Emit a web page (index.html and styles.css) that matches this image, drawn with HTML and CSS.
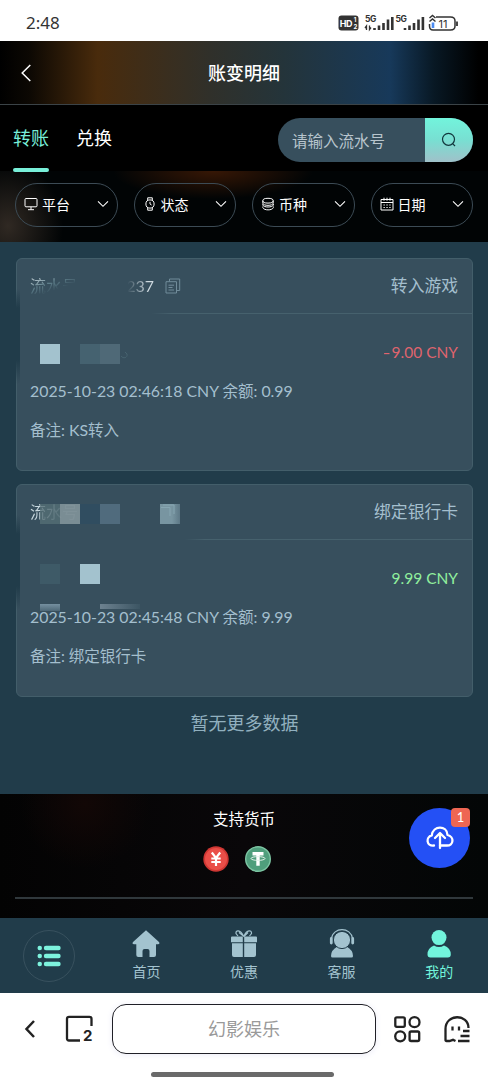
FILE: index.html
```html
<!DOCTYPE html>
<html lang="zh-CN">
<head>
<meta charset="utf-8">
<meta name="viewport" content="width=device-width, initial-scale=1">
<title>账变明细</title>
<link rel="stylesheet" href="styles.css">
</head>
<body>
<div class="phone">
  <div class="status">
    <span class="clock">2:48</span>
    <svg class="status-icons" width="122" height="18" viewBox="0 0 122 18">
      <rect x="0.5" y="1.5" width="20" height="15" rx="3" fill="#333"/>
      <text class="st-hd" x="1.800" y="12.500">HD</text>
      <text class="st-sub" x="15.800" y="8">1</text>
      <text class="st-sub" x="15.500" y="15.300">2</text>
      <text class="st-5g" x="27" y="8">5G</text>
      <g stroke="#333" stroke-width="2.6">
        <path d="M36.500 16v-2M41 16v-4.500M45.500 16v-7M50 16V5.500M54.300 16V3"/>
        <path d="M67 16v-2M71.500 16v-4.500M76 16v-7M80.500 16V5.500M84.900 16V3"/>
      </g>
      <path d="M28.500 16v-4l-1.500 2M31.500 11.500v4l1.500-2" fill="none" stroke="#333" stroke-width="1.300"/>
      <text class="st-5g" x="57.500" y="8">5G</text>
      <path d="M98 3h14.500q4.500 0 4.500 4v5q0 4-4.500 4H95q-3.500 0-3.500-4v-2" fill="none" stroke="#333" stroke-width="1.500"/>
      <path d="M119 7.500v4.500" stroke="#333" stroke-width="1.800"/>
      <path d="M91.500 4l3-2.500 3 2.500M91.500 7.500l3-2.500 3 2.500" fill="none" stroke="#333" stroke-width="1.500"/>
      <path d="M95 8.500v5.500" stroke="#4b8bf0" stroke-width="2.600"/>
      <text class="st-bat" x="100.500" y="13.500">11</text>
    </svg>
  </div>

  <header class="header">
    <svg class="back" width="12" height="20" viewBox="0 0 12 20"><path d="M10.300 2L2.200 10l8.100 8" fill="none" stroke="#fff" stroke-width="1.500"/></svg>
    <h1 class="title">账变明细</h1>
  </header>

  <div class="tabs">
    <div class="tab active">转账</div>
    <div class="tab">兑换</div>
    <div class="search">
      <span class="placeholder">请输入流水号</span>
      <span class="search-btn"><svg width="16" height="16" viewBox="0 0 16 16" fill="none" stroke="#12373d" stroke-width="1.200"><circle cx="7.500" cy="7.300" r="6"/><path d="M11.600 11.600l2.400 2.400"/></svg></span>
    </div>
  </div>

  <div class="filters">
    <div class="pill">
      <svg width="14" height="14" viewBox="0 0 14 14" class="ico"><rect x="1" y="1.500" width="12" height="8.300" rx="1"/><path d="M7 9.800v2.700M4 12.700h6"/></svg>
      <span>平台</span>
      <svg class="chev" width="12" height="8" viewBox="0 0 12 8"><path d="M1 1.300l5 5 5-5"/></svg>
    </div>
    <div class="pill">
      <svg width="14" height="14" viewBox="0 0 14 14" class="ico"><circle cx="7" cy="7" r="4.100"/><path d="M4.700 3.300V.8h4.600v2.500M4.700 10.700v2.500h4.600v-2.500M7 4.800V7l1.600 1"/></svg>
      <span>状态</span>
      <svg class="chev" width="12" height="8" viewBox="0 0 12 8"><path d="M1 1.300l5 5 5-5"/></svg>
    </div>
    <div class="pill">
      <svg width="14" height="14" viewBox="0 0 14 14" class="ico"><ellipse cx="7" cy="3.700" rx="5.200" ry="2.400"/><path d="M1.800 3.700v2.400c0 3 10.400 3 10.400 0V3.700M1.800 7c-1.500 4 12 4 10.600 0M1.800 9.500c-1 4.500 11.500 4.500 10.600 0"/></svg>
      <span>币种</span>
      <svg class="chev" width="12" height="8" viewBox="0 0 12 8"><path d="M1 1.300l5 5 5-5"/></svg>
    </div>
    <div class="pill">
      <svg width="14" height="14" viewBox="0 0 14 14" class="ico"><path d="M1 2.500h12v10.500H1zM1 5.500h12M4 .7v3M7 .7v3M10 .7v3M3.500 8h1.300M6.400 8h1.300M9.300 8h1.300M3.500 10.500h1.300M6.400 10.500h1.300M9.300 10.500h1.300"/></svg>
      <span>日期</span>
      <svg class="chev" width="12" height="8" viewBox="0 0 12 8"><path d="M1 1.300l5 5 5-5"/></svg>
    </div>
  </div>

  <main class="list">
    <article class="card card-a">
      <div class="card-head">
        <span class="serial serial-a"><span class="serial-label">流水号</span><span class="serial-num">237</span></span>
        <svg class="copy" width="16" height="16" viewBox="0 0 16 16"><path d="M4.500 3.500V1h10.200v11.500H12M1 3.700h10.500V15H1zM3.500 7.200h5.500M3.500 9.500h4M3.500 12h5.500"/></svg>
        <span class="kind">转入游戏</span>
      </div>
      <div class="card-body">
        <div class="amount minus"><span class="dash">-</span>9.00 CNY</div>
        <p class="line">2025-10-23 02:46:18 CNY <span class="cn">余额:</span> 0.99</p>
        <p class="line"><span class="cn">备注:</span> KS<span class="cn">转入</span></p>
      </div>
      <i class="edge"></i>
      <i class="tile a1"></i><i class="tile a2"></i><i class="tile a3"></i>
      <svg class="trace" width="9" height="10" viewBox="0 0 9 10"><path d="M1 6c2 3 7 2 6-2L5 2" fill="none" stroke="#47636f"/></svg>
    </article>
    <article class="card card-b">
      <div class="card-head">
        <span class="serial serial-b">流水号</span>
        <span class="kind">绑定银行卡</span>
      </div>
      <div class="card-body">
        <div class="amount plus">9.99 CNY</div>
        <p class="line">2025-10-23 02:45:48 CNY <span class="cn">余额:</span> 9.99</p>
        <p class="line"><span class="cn">备注: 绑定银行卡</span></p>
      </div>
      <i class="edge"></i>
      <i class="tile b1"></i><i class="tile b2"></i><i class="tile b3"></i><i class="tile b4"></i>
      <i class="tile b5"></i><i class="tile b6"></i><i class="tile b7"></i><i class="tile b8"></i><i class="tile b9"></i>
      <svg class="copy-trace" width="16" height="16" viewBox="0 0 16 16"><path d="M1 3.500h9V12M3 1h11v9" fill="none" stroke="#87a6b2"/></svg>
    </article>
    <div class="end">暂无更多数据</div>
  </main>

  <footer class="footer">
    <div class="foot-title">支持货币</div>
    <div class="coins">
      <svg width="28" height="28" viewBox="0 0 28 28"><circle cx="14" cy="14" r="12.700" fill="#cf3733"/><circle cx="14" cy="14" r="11" fill="#ea4e48"/><path d="M9.800 7.500L14 13l4.200-5.500M14 13v8M9.300 13.500h9.400M9.300 17h9.400" fill="none" stroke="#fff" stroke-width="2.200"/></svg>
      <svg width="28" height="28" viewBox="0 0 28 28"><circle cx="14" cy="14" r="12.300" fill="#4f9e7c" stroke="#7dc5a3" stroke-width="1.400"/><path d="M8.500 8.700h11M14 8.700v12" stroke="#fff" stroke-width="3.400"/><ellipse cx="14" cy="13.500" rx="7" ry="1.900" fill="none" stroke="#e3f3eb" stroke-width="1"/></svg>
    </div>
    <div class="upload">
      <svg width="28" height="26" viewBox="0 0 28 26" fill="none" stroke="#fff" stroke-width="2.300" stroke-linecap="round" stroke-linejoin="round"><path d="M8 20.500C.2 21.500-.5 12 5.800 10.300 7 0 21 0 21.500 10c7 1.500 6.500 11-1 10.500H14"/><path d="M14 23V8.500M9 13l5-5 5 5"/></svg>
      <span class="badge">1</span>
    </div>
  </footer>

  <nav class="nav">
    <div class="menu"><svg width="24" height="22" viewBox="0 0 24 22" stroke="#7df2dd" stroke-width="4.400" stroke-linecap="round"><path d="M2.700 3h.1M9 3h12.500M2.700 11h.1M9 11h12.500M2.700 19h.1M9 19h12.500"/></svg></div>
    <div class="nav-item">
      <svg width="30" height="30" viewBox="0 0 30 30" fill="#a3c3cf"><path d="M15 1.200L28 13q1.300 2-1 2.200h-2V26q0 2-2 2h-4.500v-6q0-2-2-2h-3q-2 0-2 2v6H7.300q-2 0-2-2V15.200H3q-2.400-.2-1-2.200z"/></svg>
      <span>首页</span>
    </div>
    <div class="nav-item">
      <svg width="30" height="30" viewBox="0 0 30 30" fill="#a3c3cf"><path d="M2 8.500q0-1 1-1h10.800v5.700H2zM15.200 7.500H27q1 0 1 1v4.700H15.200zM3 14.300h10.800V28H5q-2 0-2-2zM15.200 14.300H27V26q0 2-2 2h-9.800z"/><path d="M14.500 7C11 0 6.500 1 7 4.500L9 7M15 7c3-7 8-6 7.500-2.500L20.500 7M10 3.500l5 4 4-4" fill="none" stroke="#a3c3cf" stroke-width="1.200"/></svg>
      <span>优惠</span>
    </div>
    <div class="nav-item">
      <svg width="30" height="30" viewBox="0 0 30 30" fill="#a3c3cf"><path d="M10.500 17.500q4.500 4 9 0 6.500 3.500 6.500 9.500 0 1.500-1.500 1.500H5.500Q4 28.500 4 27q0-6 6.500-9.500z"/><circle cx="15" cy="11" r="8.600" stroke="#213c4a"/><path d="M4.500 9.500C6-2.300 24-2.300 25.500 9.500" fill="none" stroke="#a3c3cf" stroke-width="1.200"/><path d="M4.300 9.500v4.500M25.700 9.500v4.500" stroke="#a3c3cf" stroke-width="2.800" stroke-linecap="round"/></svg>
      <span>客服</span>
    </div>
    <div class="nav-item on">
      <svg width="30" height="30" viewBox="0 0 30 30" fill="#72f4dc"><circle cx="15" cy="8.600" r="7.500"/><path d="M10 16.500q5 3 10 0 6.800 2.500 6.800 9 0 3-3 3H6.500q-3 0-3-3 0-6.500 6.500-9z"/></svg>
      <span>我的</span>
    </div>
  </nav>

  <div class="browser">
    <div class="toolbar">
      <svg class="b-back" width="14" height="22" viewBox="0 0 14 22"><path d="M11 3L3.500 11l7.500 8" fill="none" stroke="#222" stroke-width="2.500"/></svg>
      <svg class="b-tabs" width="30" height="30" viewBox="0 0 30 30"><path d="M16 26.500H5q-2 0-2-2V4.800q0-2 2-2h20.500q2 0 2 2V12" fill="none" stroke="#222" stroke-width="2.300"/><text class="tab-count" x="19" y="26.800">2</text></svg>
      <div class="address">幻影娱乐</div>
      <svg class="b-grid" width="28" height="28" viewBox="0 0 28 28" fill="none" stroke="#222" stroke-width="2.300"><rect x="2.300" y="2.300" width="9.500" height="9.500" rx="1.500"/><circle cx="21.500" cy="7.200" r="5"/><circle cx="7.200" cy="21.300" r="5"/><rect x="16.600" y="16.500" width="9.600" height="9.500" rx="1.500"/></svg>
      <svg class="b-ghost" width="28" height="28" viewBox="0 0 28 28" fill="none" stroke="#222" stroke-width="2.300"><path d="M12.500 26l-2.500-1.200L6.500 26H3.500q-1 0-1-1V14C2.500-1.500 25.500-1.500 25.500 13M9.500 11.500v4M16 11.500v4M20 16h6.500M17.500 21h9M15 26h11.500"/></svg>
    </div>
    <div class="home-bar"></div>
  </div>
</div>
</body>
</html>
```

FILE: styles.css
```css
* { box-sizing: border-box; }

body {
  margin: 0;
  background: #fff;
  font-family: Lato, "Noto Sans CJK SC", sans-serif;
}

svg { display: block; flex: none; }

.phone {
  width: 488px;
  height: 1084px;
  display: flex;
  flex-direction: column;
  overflow: hidden;
}

/* status bar */
.status {
  height: 41px;
  flex: none;
  display: flex;
  justify-content: space-between;
  align-items: center;
  padding: 5px 28px 0 26px;
  background: #fff;
  color: #333;
}
.clock { font: 17px/20px "Noto Sans", sans-serif; }
.st-hd { font: bold 9px Inter, sans-serif; fill: #fff; letter-spacing: -0.400px; }
.st-sub { font: bold 6px Inter, sans-serif; fill: #fff; }
.st-5g { font: bold 8.500px Inter, sans-serif; fill: #333; letter-spacing: -0.500px; }
.st-bat { font: 11px Inter, sans-serif; fill: #333; }

/* header */
.header {
  height: 64px;
  flex: none;
  display: grid;
  grid-template-columns: 40px 1fr 40px;
  align-items: center;
  border-bottom: 1px solid #3b4347;
  background: linear-gradient(90deg, #000 0, #0c0803 6%, #492b0c 20%, #30302a 43%, #24343a 58%, #17395a 80%, #081824 89%, #000 98%);
}
.back { margin-left: 20px; }
.title { margin: 0; text-align: center; font-size: 18px; line-height: 26px; font-weight: 500; color: #fff; }

/* tabs and search */
.tabs {
  position: relative;
  z-index: 1;
  height: 66px;
  flex: none;
  display: flex;
  align-items: center;
  gap: 27px;
  padding: 4px 15px 0 13px;
  background: #000;
}
.tab {
  height: 64px;
  flex: none;
  display: flex;
  flex-direction: column;
  font-size: 18px;
  line-height: 60px;
  color: #fff;
}
.tab.active { color: #78efd9; }
.tab.active::after { content: ""; height: 4px; border-radius: 2px; background: #78efd9; }
.search {
  width: 195px;
  height: 44px;
  margin-left: auto;
  display: flex;
  align-items: center;
  border-radius: 22px;
  overflow: hidden;
  background: #374f5d;
}
.placeholder { flex: 1; padding: 0 0 1px 14px; font-size: 15.500px; color: #b8c5cd; }
.search-btn {
  width: 48px;
  height: 44px;
  display: flex;
  align-items: center;
  justify-content: center;
  background: linear-gradient(#72f4dc, #78dfd2 50%, #a0c1c9);
}

/* filters */
.filters {
  height: 71px;
  flex: none;
  display: grid;
  grid-template-columns: repeat(4, 1fr);
  gap: 16px;
  padding: 12px 15px 15px;
  background:
    radial-gradient(ellipse 100px 28px at 213px 0, #371705, transparent),
    radial-gradient(ellipse 55px 65px at 8px 55px, #302923, transparent),
    #010405;
}
.pill {
  height: 44px;
  display: flex;
  align-items: center;
  border: 1px solid #3c4b55;
  border-radius: 22px;
  padding: 0 8px 2px 8px;
  font-size: 14px;
  color: #fff;
}
.pill > span { margin-left: 4px; }
.ico { fill: none; stroke: #fff; stroke-width: 1; }
.chev { margin-left: auto; fill: none; stroke: #fff; stroke-width: 1.100; }

/* records */
.list {
  height: 552px;
  flex: none;
  padding: 16px 15px 0 16px;
  background: #213c4a;
}
.card {
  position: relative;
  height: 213px;
  margin-bottom: 13px;
  border: 1px solid #435e6a;
  border-radius: 6px;
  background: #374f5d;
  color: #a4bfce;
}
.card-head {
  height: 55px;
  display: flex;
  align-items: center;
  padding: 0 14px 0 13px;
  border-bottom: 1px solid;
}
.card-a .card-head { border-image: linear-gradient(90deg, transparent 135px, #46616d 155px) 1; }
.card-b .card-head { border-image: linear-gradient(90deg, transparent 168px, #46616d 188px) 1; }
.serial { font-size: 16px; line-height: 22px; display: flex; }
.serial-a { width: 124px; justify-content: space-between; }
.serial-label {
  -webkit-text-fill-color: transparent;
  background: linear-gradient(160deg, #bccbd2 12%, #60808c 38%, transparent 62%);
  background-clip: text;
}
.serial-num {
  -webkit-text-fill-color: transparent;
  background: linear-gradient(90deg, transparent 5%, #cfdae0 78%);
  background-clip: text;
}
.serial-b {
  -webkit-text-fill-color: transparent;
  background: linear-gradient(100deg, #c8d8df 20%, #68808b 65%, #738c95);
  background-clip: text;
}
.copy { margin-left: 11px; fill: none; stroke: #718c9a; stroke-width: 1; }
.kind { margin-left: auto; font-size: 16.800px; line-height: 24px; }
.card-body { padding: 25px 14px 0 13px; }
.amount { height: 26px; text-align: right; font-size: 15.500px; line-height: 26px; }
.dash { display: inline-block; transform: scaleX(1.400); margin-right: 2px; }
.minus { color: #df646e; }
.plus { color: #91f09e; }
.line { margin: 13px 0 0; height: 26px; font-size: 15.850px; line-height: 26px; white-space: pre; }
.cn { font-size: 15.500px; }

/* privacy tiles over the record details */
.tile { position: absolute; width: 20px; height: 20px; }
.edge { position: absolute; left: -3px; top: 30px; width: 6px; height: 95px; background: linear-gradient(transparent, #213c4a 20%, #213c4a 75%, transparent); }
.a1 { left: 23px; top: 85px; background: #a3c2ce; }
.a2 { left: 63px; top: 85px; background: #456270; }
.a3 { left: 83px; top: 85px; background: #4f6977; }
.trace { position: absolute; left: 103px; top: 91px; }
.b1 { left: 23px; top: 19px; background: rgba(87,112,119,.75); }
.b2 { left: 43px; top: 19px; background: rgba(130,148,154,.9); }
.b3 { left: 63px; top: 19px; background: #304d60; }
.b4 { left: 83px; top: 19px; background: #506b7d; }
.b5 { left: 143px; top: 19px; background: linear-gradient(90deg, #7895a1 60%, #5d7886); }
.b6 { left: 23px; top: 79px; background: #3e5a67; }
.b7 { left: 63px; top: 79px; background: #a3c2ce; }
.b8 { left: 23px; top: 119px; height: 7px; background: linear-gradient(#7590a0, #4e6877); }
.b9 { left: 83px; top: 119px; width: 40px; height: 5px; background: linear-gradient(90deg, #6d8290, #3c5563); }
.copy-trace { position: absolute; left: 143px; top: 19px; }
.end { margin-top: 13px; text-align: center; font-size: 18px; line-height: 26px; color: #91b0bf; }

/* supported currencies */
.footer {
  position: relative;
  height: 124px;
  flex: none;
  padding: 12px 15px 0;
  background: radial-gradient(circle at 85px 10px, #120706, transparent 65px), linear-gradient(90deg, #030303, #090709 50%, #030606);
}
.foot-title { text-align: center; font-size: 15.500px; line-height: 26px; color: #fff; }
.coins {
  display: flex;
  justify-content: center;
  gap: 14px;
  height: 67px;
  padding: 13px 15px 0 0;
  border-bottom: 2px solid #30383c;
}
.upload {
  position: absolute;
  right: 18px;
  top: 14px;
  width: 61px;
  height: 60px;
  display: flex;
  align-items: center;
  justify-content: center;
  border-radius: 50%;
  background: #2450f5;
}
.badge {
  position: absolute;
  top: 0;
  right: 0;
  width: 19px;
  height: 19px;
  border-radius: 4px;
  background: #ee6653;
  color: #fff;
  text-align: center;
  font-size: 13px;
  line-height: 19px;
}

/* bottom navigation */
.nav {
  height: 75px;
  flex: none;
  display: grid;
  grid-template-columns: repeat(5, 1fr);
  justify-items: center;
  background: #213c4a;
}
.menu {
  width: 52px;
  height: 52px;
  margin-top: 12px;
  display: flex;
  align-items: center;
  justify-content: center;
  border: 1px solid #38515e;
  border-radius: 50%;
}
.nav-item {
  padding-top: 11px;
  display: flex;
  flex-direction: column;
  align-items: center;
  font-size: 14px;
  line-height: 25px;
  color: #a3c3cf;
}
.nav-item.on { color: #72f4dc; }

/* browser toolbar */
.browser { height: 91px; flex: none; background: #fff; }
.toolbar {
  height: 79px;
  display: flex;
  align-items: center;
  padding: 0 17px 7px 23px;
}
.b-tabs { margin-left: 27px; }
.address {
  width: 264px;
  height: 50px;
  margin-left: 18px;
  border: 1px solid #202027;
  border-radius: 14px;
  box-shadow: 0 1px 6px #ececf7;
  text-align: center;
  font-size: 18px;
  line-height: 48px;
  color: #999;
}
.b-grid { margin-left: 17px; }
.b-ghost { margin-left: auto; }
.tab-count { font: bold 15px Inter, sans-serif; fill: #222; stroke: none; }
.home-bar { width: 183px; height: 5px; margin-left: 151px; border-radius: 3px; background: #6a6a6a; }
```
